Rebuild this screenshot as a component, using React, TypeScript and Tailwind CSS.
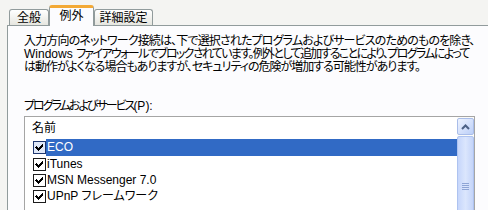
import React from "react";

type Item = { name: string; selected?: boolean };

const items: Item[] = [
  { name: "ECO", selected: true },
  { name: "iTunes" },
  { name: "MSN Messenger 7.0" },
  { name: "UPnP フレームワーク" },
];

function CheckBox({ focused = false }: { focused?: boolean }) {
  return (
    <div
      className={
        focused
          ? "flex h-[13px] w-[13px] shrink-0 items-center justify-center border border-[#1f3870] bg-[#dfe8f8]"
          : "flex h-[13px] w-[13px] shrink-0 items-center justify-center border border-[#1c1c1c] bg-white"
      }
    >
      <svg width="11" height="11" viewBox="0 0 11 11" shapeRendering="crispEdges">
        <path d="M2 4h1v1h1v1h1v-1h1v-1h1v-1h1v-1h1v3h-1v1h-1v1h-1v1h-1v1h-1v-1h-1v-1h-1v-1h-1z" fill="#000" />
      </svg>
    </div>
  );
}

function Tab({ label, active = false, width }: { label: string; active?: boolean; width: string }) {
  if (active) {
    return (
      <div
        className={`relative z-10 -mb-px flex h-[21px] ${width} items-center justify-center rounded-t-[3px] border-x border-t-[3px] border-x-[#919b9c] border-t-[#f3a935] bg-[#fcfcfe] pb-[1px]`}
      >
        {label}
      </div>
    );
  }
  return (
    <div
      className={`flex h-[16px] ${width} items-center justify-center rounded-t-[3px] border-x border-t border-[#919b9c] bg-linear-to-b from-white to-[#e6e6e0] pt-[1px]`}
    >
      {label}
    </div>
  );
}

export default function App() {
  return (
    <div className="h-[210px] w-[488px] overflow-hidden bg-[#f4f4f2] pl-[7px] pt-[5px] font-['Liberation_Sans','Noto_Sans_CJK_JP',sans-serif] text-[12px] leading-[13px] text-black [font-feature-settings:'palt']">
      <div className="ml-[2px] flex h-[20px] items-end">
        <Tab label="全般" width="w-[40px]" />
        <Tab label="例外" width="w-[45px]" active />
        <Tab label="詳細設定" width="w-[59px]" />
      </div>
      <div className="h-[200px] border-l border-t border-[#919b9c] bg-[#fcfcfe] pl-[16px] pt-[9px]">
        <p className="whitespace-nowrap">
          <span className="block tracking-[-0.85px]">
            入力方向のネットワーク接続は、下で選択されたプログラムおよびサービスのためのものを除き、
          </span>
          <span className="block">
            Windows{" "}
            <span className="tracking-[-1.65px]">
              ファイアウォールでブロックされています。例外として追加することにより、プログラムによって
            </span>
          </span>
          <span className="block tracking-[-1px]">
            は動作がよくなる場合もありますが、セキュリティの危険が増加する可能性があります。
          </span>
        </p>
        <div className="mt-[26px]">
          <span className="tracking-[-2px]">プログラムおよびサービス</span>(P):
        </div>
        <div className="mt-[3px] flex h-[120px] w-[451px] border border-[#a5a5a5] bg-white">
          <div className="flex-1">
            <div className="flex h-[22px] items-center pl-[7px]">名前</div>
            {items.map((item, i) => (
              <div
                key={item.name}
                className={i === 0 ? "flex h-[17px] items-center pl-[8px]" : "flex h-[16px] items-center pl-[8px]"}
              >
                <CheckBox focused={item.selected} />
                <div
                  className={
                    item.selected
                      ? "flex h-full flex-1 items-center bg-[#316ac5] pl-[1px] text-white"
                      : "flex h-full flex-1 items-center pl-[1px]"
                  }
                >
                  {item.name}
                </div>
              </div>
            ))}
          </div>
          <div className="flex w-[17px] flex-col bg-[#fbfbf9] pt-[1px]">
            <div className="flex h-[17px] items-center justify-center rounded-[2px] border border-[#a9bde9] bg-linear-to-br from-[#eef3fe] to-[#bccff8]">
              <svg width="9" height="6" viewBox="0 0 9 6">
                <path d="M1 5 L4.5 1.5 L8 5" stroke="#4d6185" strokeWidth="2" fill="none" />
              </svg>
            </div>
            <div className="mt-[1px] flex flex-1 flex-col items-center rounded-[2px] border border-[#aec3f0] bg-linear-to-r from-[#c6d6fb] via-[#dbe6fd] to-[#c4d4f9] pt-[46px]">
              <div className="h-px w-[7px] bg-[#8ea5d6]" />
              <div className="mt-px h-px w-[7px] bg-[#8ea5d6]" />
              <div className="mt-px h-px w-[7px] bg-[#8ea5d6]" />
              <div className="mt-px h-px w-[7px] bg-[#8ea5d6]" />
            </div>
          </div>
        </div>
      </div>
    </div>
  );
}
